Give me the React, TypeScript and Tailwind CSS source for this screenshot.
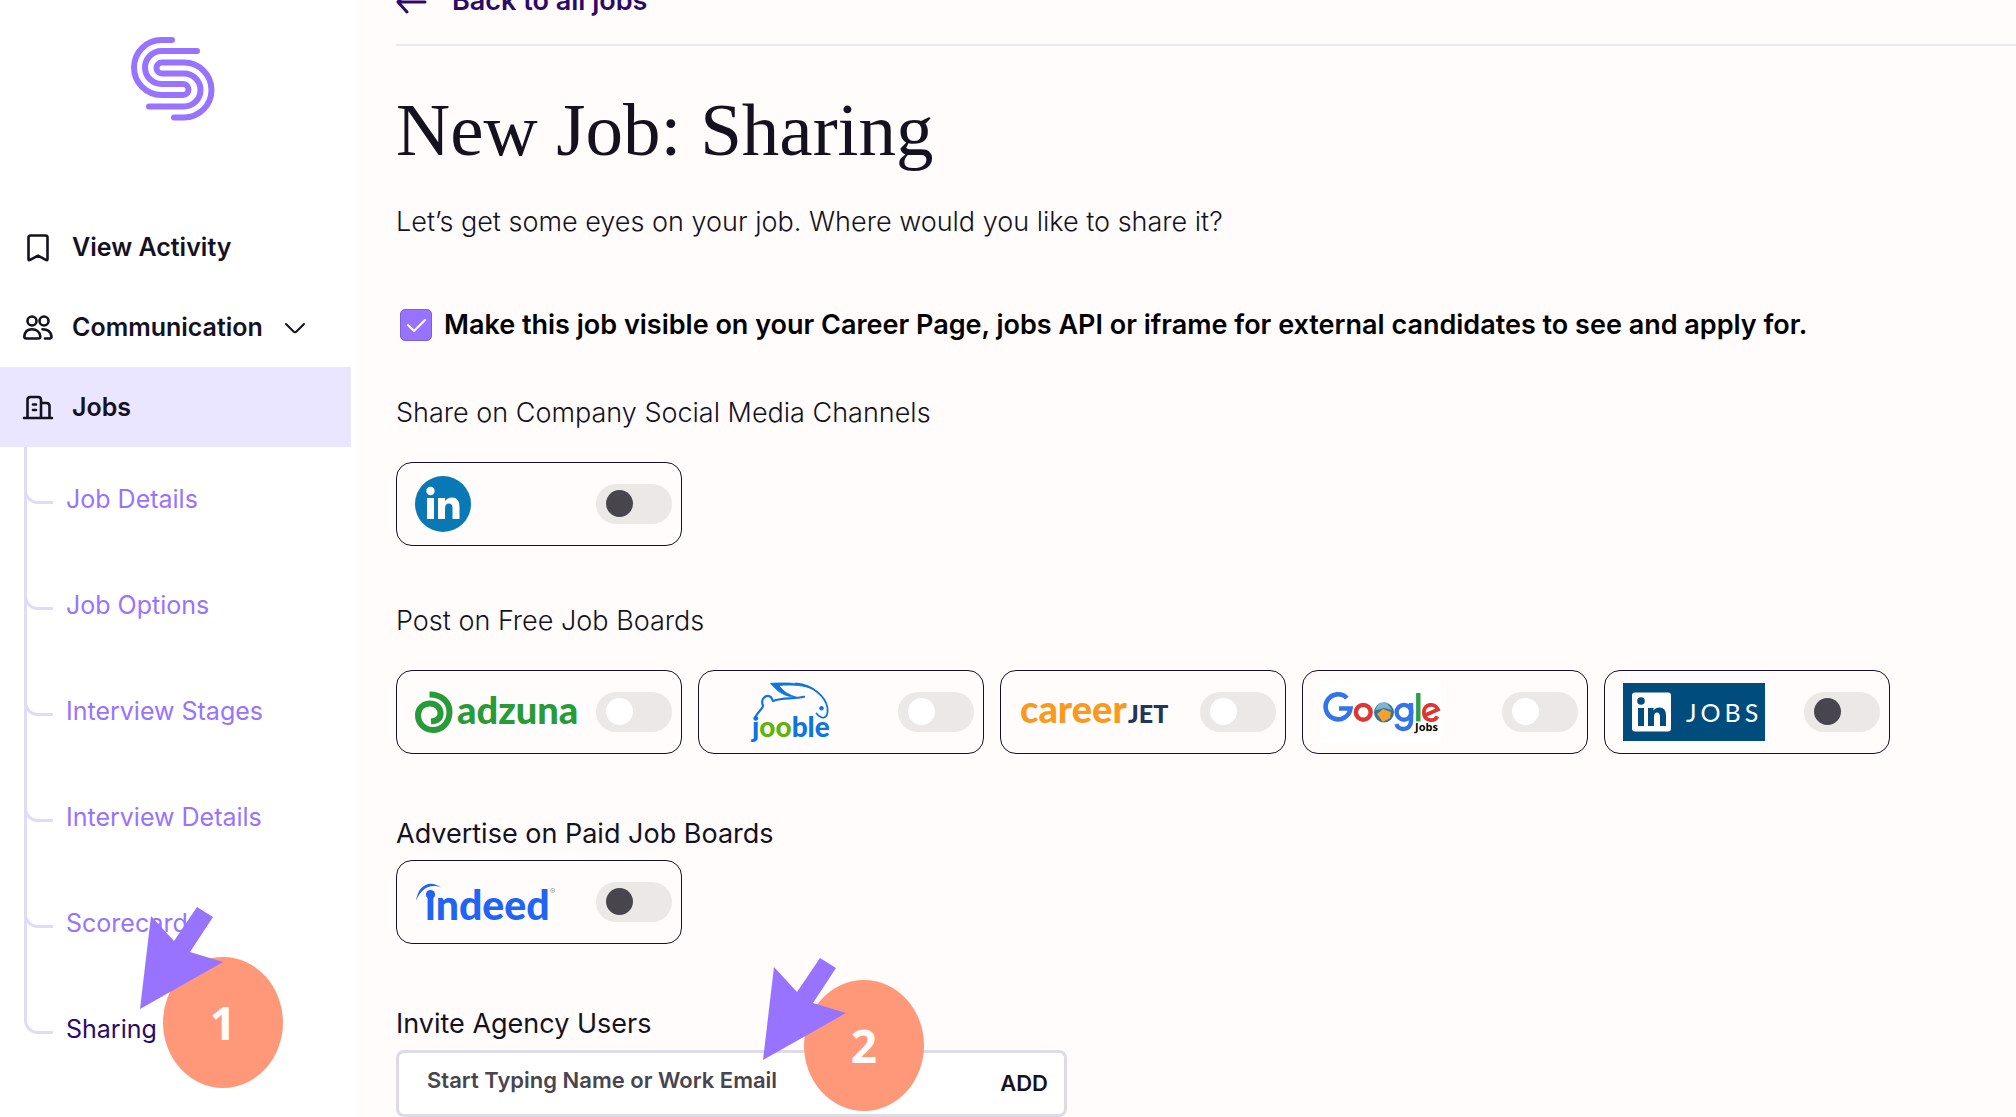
import { useState } from "react";
import type { ReactNode } from "react";


const subItems = ["Job Details", "Job Options", "Interview Stages", "Interview Details", "Scorecard", "Sharing"];


function SeedLogo() {
    return (
        <svg className="h-[84px] w-[84px]" viewBox="0 0 84 84" fill="none" stroke="#9873ff" strokeWidth="6" strokeLinecap="round">
            <path d="M41 3H30.5a27.5 27.5 0 0 0 0 55H52a5.5 5.5 0 0 0 0-11H30.5a16.5 16.5 0 0 1 0-33H66" />
            <path d="M43 80.500H53a27.500 27.500 0 0 0 0-55H31a5.500 5.500 0 0 0 0 11H53a16.500 16.500 0 0 1 0 33H18" />
        </svg>
    );
}

function BookmarkIcon() {
    return (
        <svg className="h-8 w-8" viewBox="0 0 32 32" fill="none" stroke="#14121f" strokeWidth="2.6" strokeLinecap="round" strokeLinejoin="round">
            <path d="M8.500 3.500h15a2 2 0 0 1 2 2v21.500q0 1.800-1.600.900L16 23.700 8.100 27.900Q6.500 28.800 6.500 27V5.500a2 2 0 0 1 2-2Z" />
        </svg>
    );
}

function PeopleIcon() {
    return (
        <svg className="h-8 w-8" viewBox="0 0 32 32" fill="none" stroke="#14121f" strokeWidth="2.6" strokeLinecap="round" strokeLinejoin="round">
            <circle cx="10" cy="9" r="4.500" />
            <circle cx="22" cy="9" r="4.500" />
            <path d="M4.500 26.500Q2.300 26.500 2.300 24.500C2.800 19.500 6 17.300 10 17.300s7.800 2.200 8.300 7.200q0 2-2 2Z" />
            <path d="M20.500 17.300c5 0 8.300 2.200 9 7.200q0 2-2 2H23" />
        </svg>
    );
}

function BuildingIcon() {
    return (
        <svg className="h-8 w-8" viewBox="0 0 32 32" fill="none" stroke="#14121f" strokeWidth="2.600" strokeLinecap="round" strokeLinejoin="round">
            <path d="M2 26h28M5.500 26V8q0-3 3-3h7.500q3 0 3 3V26M19 11h5.500q3 0 3 3v12M11 12.500h3M11 18h3" />
        </svg>
    );
}

function LinkedInCircle() {
    return (
        <svg className="h-14 w-14" viewBox="0 0 56 56">
            <circle cx="28" cy="28" r="28" fill="#0a78b5" />
            <g fill="#fff">
                <circle cx="15.500" cy="15" r="4.200" />
                <path d="M12 22h7v21h-7zM23 22h7v3q2.500-3.500 7-3.500 7.500 0 7.500 9.500v12h-7V32q0-4.500-3.500-4.500-4 0-4 5V43h-7z" />
            </g>
        </svg>
    );
}

function AdzunaLogo() {
    return (
        <svg className="h-14 w-[164px]" viewBox="0 0 164 56">
            <path d="M14.500 10.500C27 10.500 34.500 18 34.500 28 34.500 39 27 46 18 46S3 39 3 31C3 24 8.500 19.500 15 19.500S25.500 24 25.500 29.500 21.500 37 16 37.500" fill="none" stroke="#279b37" strokeWidth="6" />
            <text x="42" y="40" fontFamily="Lato, Inter, sans-serif" fontWeight="900" fontSize="38" fill="#279b37">adzuna</text>
        </svg>
    );
}

function JoobleLogo() {
    return (
        <svg className="h-[62px] w-[88px]" viewBox="0 0 88 62">
            <path d="M6 37C8 31 14 28 14 24.500 11 18 17 13.500 21 15.500c2 1 2 3 3 4.500C34 16 44 18.500 55 15.800" fill="none" stroke="#0e74e0" strokeWidth="2.200" strokeLinecap="round" />
            <path d="M47 2.500C64 4 77 16 78.500 27 79.500 38 73 39 67.500 32.500" fill="none" stroke="#0e74e0" strokeWidth="1.800" strokeLinecap="round" />
            <path d="M21.500 2.300C39 1.500 54 1.500 65 8.500 55 4 42 3.500 30 4.500q5 8 18 12C34 15.500 28 10 21.500 2.300Z" fill="#0e74e0" stroke="#0e74e0" strokeWidth=".8" />
            <circle cx="72.500" cy="27.300" r="2.200" fill="#0e74e0" />
            <text x="3" y="56" fontFamily="Lato, Inter, sans-serif" fontWeight="900" fontSize="28" fill="#0e74e0">j<tspan fill="#5fb30b">oo</tspan>ble</text>
        </svg>
    );
}

function CareerjetLogo() {
    return (
        <svg className="h-14 w-[152px]" viewBox="0 0 152 56">
            <text x="1" y="39" fontFamily="Lato, Inter, sans-serif" fontWeight="900" fontSize="38" fill="#f99a1f">career</text>
            <text x="109" y="39" fontFamily="Lato, Inter, sans-serif" fontWeight="900" fontSize="25" fill="#20365a">JET</text>
        </svg>
    );
}

function GoogleJobsLogo() {
    return (
        <svg className="h-[62px] w-[120px] bg-white" viewBox="0 0 120 62">
            <path d="M26 17A12.500 12.500 0 1 0 29.500 27.500H18" fill="none" stroke="#3374ea" strokeWidth="4.600" />
            <g fill="none" strokeWidth="4.400">
                <circle cx="42.300" cy="31.300" r="7.400" stroke="#e1352f" />
                <circle cx="83" cy="31.300" r="7.400" stroke="#3374ea" />
                <path d="M90 22v18c0 10-13 10-14.500 3" stroke="#3374ea" />
                <path d="M97.300 12v28.500" stroke="#2a9f48" />
                <path d="M103.500 34.500 117 28.500C114 21.500 102.500 22.500 102.800 31.500c.2 8.500 10 10 13.700 4" stroke="#e1352f" strokeWidth="3.800" />
            </g>
            <circle cx="63" cy="31.500" r="10" fill="#34749c" />
            <path d="M54 29.500 58 22l7-1 6 8-8-2Z" fill="#7fb4d0" />
            <path d="m56 33 6-5 8 3-1 6-7 4Z" fill="#f6a02d" />
            <text x="94" y="50" fontFamily="Open Sans, sans-serif" fontWeight="700" fontSize="11" fill="#000">Jobs</text>
        </svg>
    );
}

function LinkedInJobsLogo() {
    return (
        <svg className="h-[58px] w-[142px]" viewBox="0 0 142 58">
            <rect width="142" height="58" fill="#004c7c" />
            <rect x="9" y="9.500" width="39" height="39" rx="3" fill="#fff" />
            <g fill="#004c7c">
                <circle cx="18" cy="18" r="3.800" />
                <path d="M15 25h6v18h-6zM25 25h5.500v2.500q2-3 6-3 6.500 0 6.500 8V43h-6v-9q0-4.500-3-4.500t-3 4.500v9h-6z" />
            </g>
            <text x="63" y="39" className="tracking-[4px]" fontFamily="Lato, sans-serif" fontSize="25" fill="#fff">JOBS</text>
        </svg>
    );
}

function IndeedLogo() {
    return (
        <svg className="h-14 w-[142px]" viewBox="0 0 142 56">
            <path d="M1 27C3 12 14 5 26 13.500 15 9 5.500 15 1 27Z" fill="#2164f3" />
            <circle cx="15.500" cy="20.500" r="4.600" fill="#2164f3" />
            <text x="10" y="46" fontFamily="Lato, Inter, sans-serif" fontWeight="900" fontSize="41" fill="#2164f3">ındeed</text>
            <text x="135" y="20" fontFamily="Inter, sans-serif" fontSize="8" fill="#8c93a8">®</text>
        </svg>
    );
}


function BoardCard({ label, dark, children }: { label: string; dark?: boolean; children: ReactNode }) {
    const [on, setOn] = useState(false);

    return (
        <label className="flex h-[84px] w-[286px] items-center justify-between rounded-2xl border border-[#14121f] pr-[9px] pl-[18px]">
            {children}
            <span className="relative h-10 w-[76px] shrink-0">
                <input
                    type="checkbox"
                    role="switch"
                    aria-label={label}
                    checked={on}
                    onChange={(e) => setOn(e.target.checked)}
                    className="block h-full w-full appearance-none rounded-full bg-[#ebe8e7] checked:bg-[#9873ff]"
                />
                <span className={dark ? "absolute top-[6px] left-[10px] h-[27px] w-[27px] rounded-full bg-[#48454e]" : "absolute top-[6px] left-[10px] h-[27px] w-[27px] rounded-full bg-white"}></span>
            </span>
        </label>
    );
}

// numbered hint with its arrow, sits on top of the page
function Marker({ num, className, circle }: { num: string; className: string; circle: string }) {
    return (
        <div className={className}>
            <div className={circle}>{num}</div>
            <svg className="absolute top-0 left-0 h-[102px] w-[83px]" viewBox="0 0 83 102">
                <path d="M57 0 73 10 50 45 83 55 0 102 11 9 34 34Z" fill="#9873ff" />
            </svg>
        </div>
    );
}


export default function App() {
    const [visible, setVisible] = useState(true);
    const [invite, setInvite] = useState("");

    return (
        <div className="relative flex h-screen overflow-hidden bg-[#fffcfb] font-['Inter',sans-serif] text-[#14121f]">

            <aside className="w-[357px] shrink-0 bg-white">
                <div className="flex h-[207px] justify-center pt-[37px] pr-3">
                    <SeedLogo />
                </div>
                <nav className="mr-[6px] text-[25px] font-semibold">
                    <a href="#activity" className="flex h-20 items-center gap-[18px] pt-0.5 pl-[22px]">
                        <BookmarkIcon />View Activity
                    </a>
                    <button className="flex h-20 w-full items-center gap-[18px] pt-0.5 pl-[22px]">
                        <PeopleIcon />Communication
                        <svg className="h-6 w-6" viewBox="0 0 24 24" fill="none" stroke="#14121f" strokeWidth="2" strokeLinecap="round" strokeLinejoin="round">
                            <path d="m5 8 7.500 7.500q1.500 1.500 3 0L23 8" />
                        </svg>
                    </button>
                    <a href="#jobs" className="flex h-20 items-center gap-[18px] bg-[#ebe6ff] pt-0.5 pl-[22px]">
                        <BuildingIcon />Jobs
                    </a>
                    <ul className="pl-6 font-normal">
                        {subItems.map((item, i) => (
                            <li key={item} className="flex h-[106px]">
                                <span className={i < subItems.length - 1 ? "w-[29px] border-l-[3px] border-[#dfdbf8]" : "w-[29px]"}>
                                    <span className={i < subItems.length - 1 ? "-ml-[3px] block h-[57px] w-[29px] rounded-bl-[14px] border-b-[3px] border-l-[3px] border-[#dfdbf8]" : "block h-[57px] w-[29px] rounded-bl-[14px] border-b-[3px] border-l-[3px] border-[#dfdbf8]"}></span>
                                </span>
                                <a href="#sub" className={item === "Sharing" ? "flex items-center pl-[13px] text-[#2d0a68]" : "flex items-center pl-[13px] text-[#9873ff]"}>{item}</a>
                            </li>
                        ))}
                    </ul>
                </nav>
            </aside>

            <main className="min-w-0 flex-1 pl-[39px] text-[27px] text-[#14121f]">
                <a href="#back" className="-mt-[43px] flex h-[89px] items-center gap-6 border-b-2 border-[#e8e9ee] pt-0.5 font-semibold text-[#2d0a68]">
                    <svg className="h-8 w-8" viewBox="0 0 32 32" fill="none" stroke="#2d0a68" strokeWidth="3" strokeLinecap="round" strokeLinejoin="round">
                        <path d="M29 16H2M11 6 2 16l9 10" />
                    </svg>
                    Back to all jobs
                </a>

                <h1 className="mt-[39px] font-['Liberation_Serif',serif] text-[75px] leading-[90px]">New Job: Sharing</h1>
                <p className="mt-[27px] leading-10 font-light">Let’s get some eyes on your job. Where would you like to share it?</p>

                <label className="mt-[63px] flex h-10 items-center gap-3 pl-1 font-semibold text-black">
                    <span className="relative h-8 w-8">
                        <input type="checkbox" checked={visible} onChange={(e) => setVisible(e.target.checked)} className="block h-8 w-8 appearance-none rounded-[5px] border border-[#7f60dc] bg-white checked:bg-[#9873ff]" />
                        {visible && <svg className="pointer-events-none absolute inset-0 h-8 w-8" viewBox="0 0 32 32" fill="none" stroke="#fff" strokeWidth="2" strokeLinecap="round" strokeLinejoin="round">
                            <path d="m8 16 6 6L25 11" />
                        </svg>}
                    </span>
                    Make this job visible on your Career Page, jobs API or iframe for external candidates to see and apply for.
                </label>

                <h2 className="mt-12 leading-10 font-light">Share on Company Social Media Channels</h2>
                <div className="mt-[29px] flex">
                    <BoardCard label="LinkedIn" dark><LinkedInCircle /></BoardCard>
                </div>

                <h2 className="mt-[55px] leading-10 font-light">Post on Free Job Boards</h2>
                <div className="mt-[29px] flex gap-4">
                    <BoardCard label="Adzuna"><AdzunaLogo /></BoardCard>
                    <BoardCard label="Jooble"><span className="pl-8"><JoobleLogo /></span></BoardCard>
                    <BoardCard label="Careerjet"><CareerjetLogo /></BoardCard>
                    <BoardCard label="Google Jobs"><GoogleJobsLogo /></BoardCard>
                    <BoardCard label="LinkedIn Jobs" dark><LinkedInJobsLogo /></BoardCard>
                </div>

                <h2 className="mt-[60px] leading-10">Advertise on Paid Job Boards</h2>
                <div className="mt-[6px] flex">
                    <BoardCard label="Indeed" dark><IndeedLogo /></BoardCard>
                </div>

                <h2 className="mt-[60px] leading-10"><label htmlFor="invite">Invite Agency Users</label></h2>
                <div className="mt-[6px] flex h-[67px] w-[671px] items-center rounded-lg border-[3px] border-[#dddbe6] bg-white pr-4 pl-7">
                    <input id="invite" value={invite} onChange={(e) => setInvite(e.target.value)} placeholder="Start Typing Name or Work Email" className="min-w-0 flex-1 pb-1.5 text-[22px] font-semibold outline-none placeholder:text-[#48454e]" />
                    <button className="text-[22px] font-semibold">ADD</button>
                </div>
            </main>

            <Marker
                num="1"
                className="absolute top-[907px] left-[140px]"
                circle="absolute top-[50px] left-[23px] flex h-[131px] w-[120px] items-center justify-center rounded-[50%] bg-[#ff9878] font-['Open_Sans'] text-[46px] font-bold text-[#fffbfa]"
            />
            <Marker
                num="2"
                className="absolute top-[958px] left-[763px]"
                circle="absolute top-[22px] left-[41px] flex h-[131px] w-[120px] items-center justify-center rounded-[50%] bg-[#ff9878] font-['Open_Sans'] text-[46px] font-bold text-[#fffbfa]"
            />
        </div>
    );
}
